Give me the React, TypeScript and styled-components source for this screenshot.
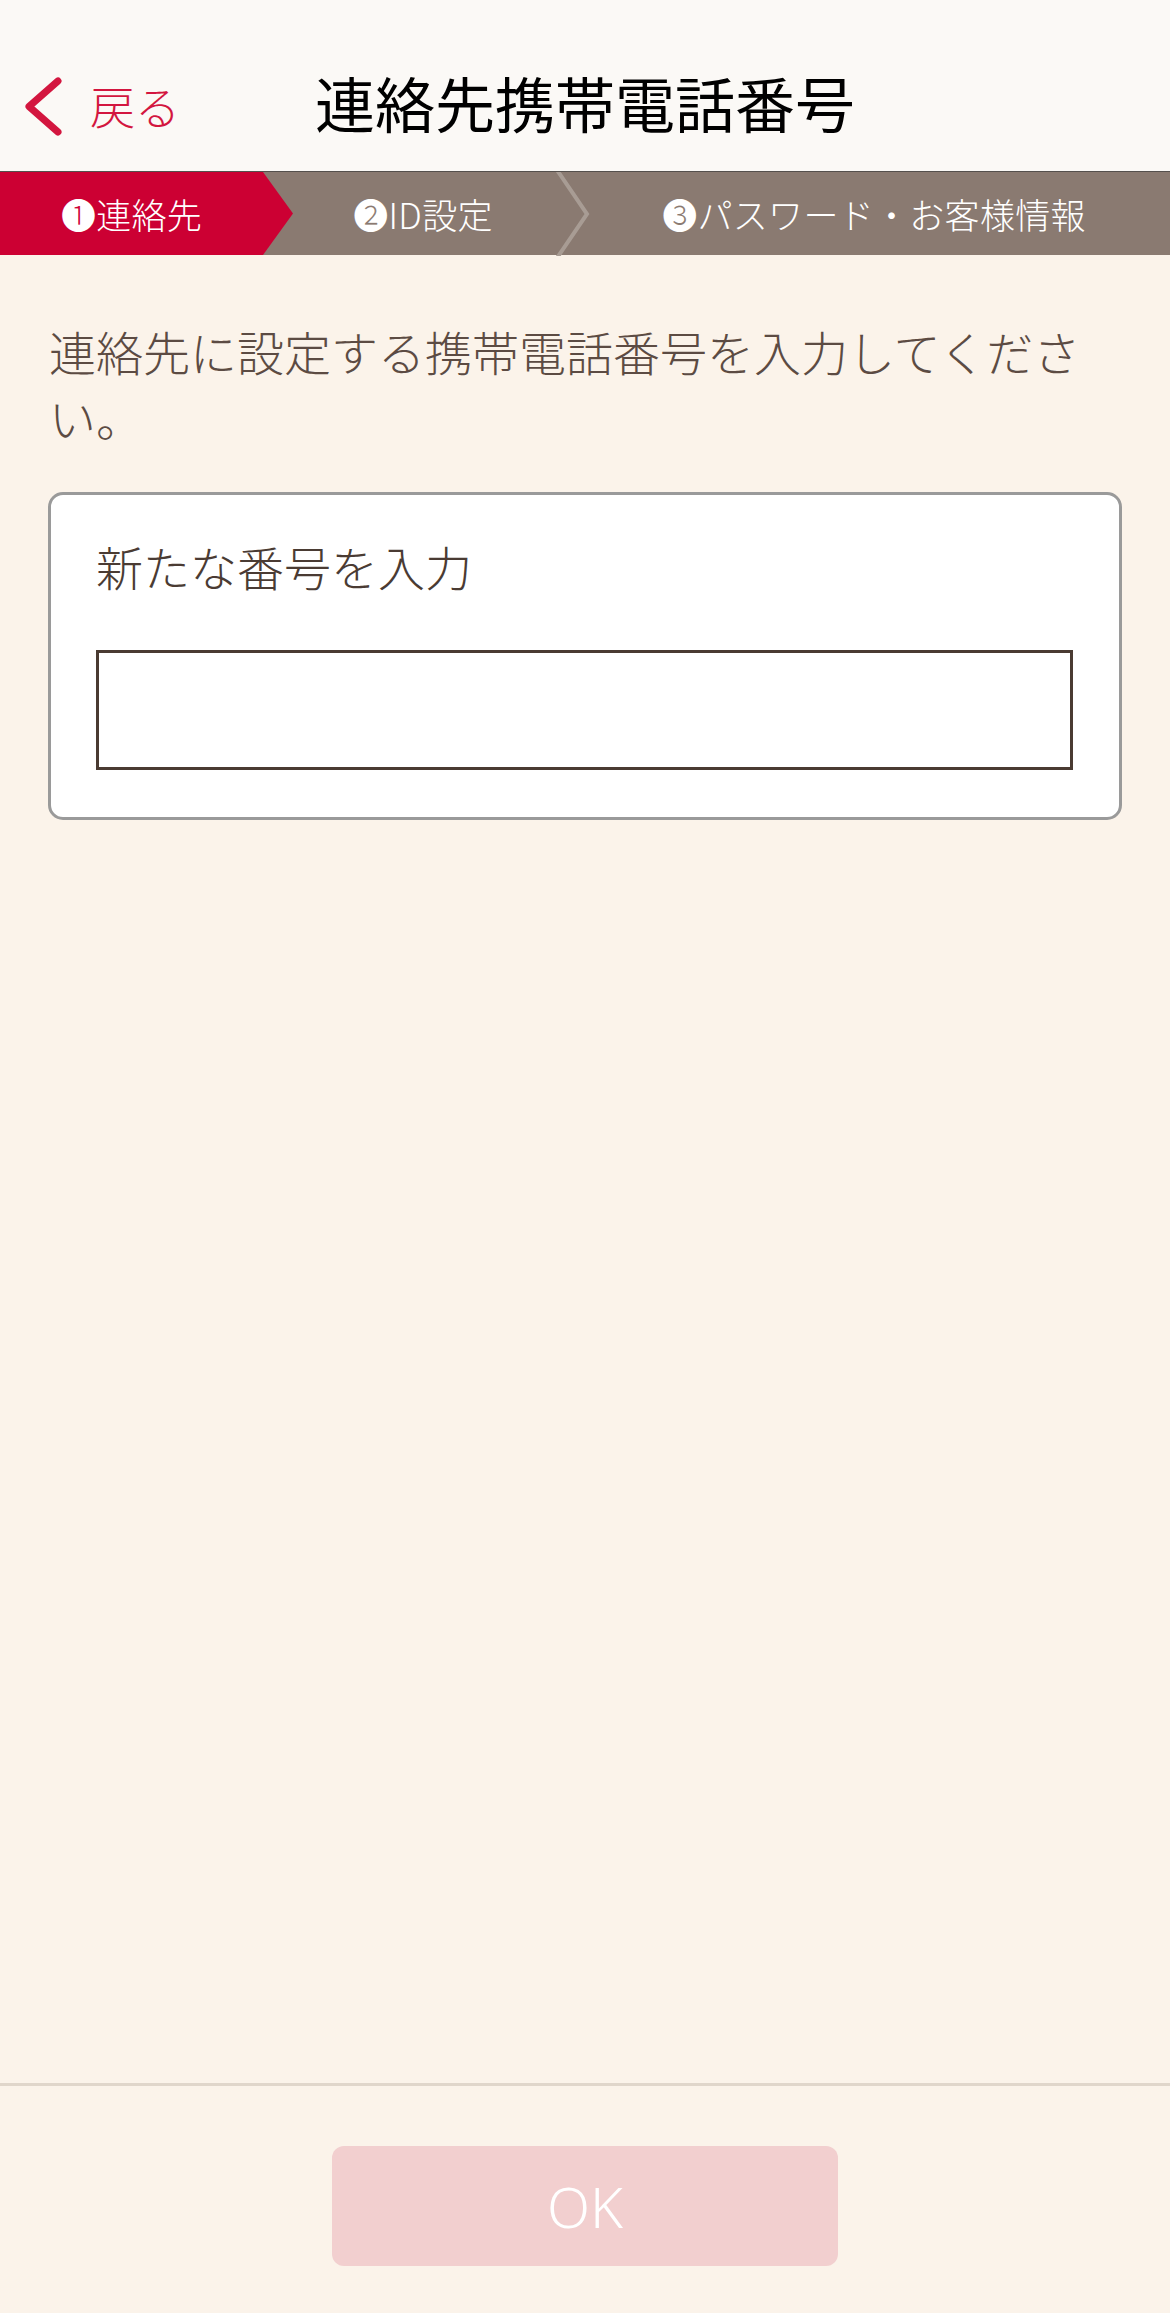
import React from "react";
import styled, { createGlobalStyle } from "styled-components";

const GlobalStyle = createGlobalStyle`
  html, body {
    margin: 0;
    padding: 0;
    background: #fbf3ea;
  }
  * {
    box-sizing: border-box;
  }
  body {
    font-family: "Noto Sans CJK JP", "Noto Sans", sans-serif;
  }
`;

const steps = [
  { mark: "❶", label: "連絡先" },
  { mark: "❷", label: "ID設定" },
  { mark: "❸", label: "パスワード・お客様情報" },
];

function App() {
  const [phone, setPhone] = React.useState<string>("");

  return (
    <>
      <GlobalStyle />
      <Page>
        <Header>
          <BackButton type="button">
            <svg width="40" height="60" viewBox="0 0 40 60">
              <polyline
                points="34,5 5,30.5 34,56"
                fill="none"
                stroke="#d3163f"
                strokeWidth="7"
                strokeLinecap="round"
                strokeLinejoin="round"
              />
            </svg>
            <BackLabel>戻る</BackLabel>
          </BackButton>
          <Title>連絡先携帯電話番号</Title>
          <span />
        </Header>

        <StepBar>
          {steps.map((s, i) => (
            <Step key={s.label} $index={i}>
              <StepLabel>
                {s.mark}
                {s.label}
              </StepLabel>
              {i === 1 && (
                <Separator width="36" height="84" viewBox="0 0 36 84">
                  <polyline
                    points="2,-2 32,42 2,86"
                    fill="none"
                    stroke="#a89c94"
                    strokeWidth="4"
                  />
                </Separator>
              )}
            </Step>
          ))}
        </StepBar>

        <Main>
          <Description>
            連絡先に設定する携帯電話番号を入力してください。
          </Description>
          <Card>
            <FieldLabel>新たな番号を入力</FieldLabel>
            <PhoneInput
              type="tel"
              value={phone}
              onChange={(e) => setPhone(e.target.value)}
            />
          </Card>
        </Main>

        <Footer>
          <OkButton type="button" disabled={phone.length === 0}>
            OK
          </OkButton>
        </Footer>
      </Page>
    </>
  );
}

const Page = styled.div`
  height: 100vh;
  display: flex;
  flex-direction: column;
  background: #fbf3ea;
`;

const Header = styled.header`
  height: 172px;
  padding-top: 32px;
  display: grid;
  grid-template-columns: 1fr auto 1fr;
  align-items: center;
  background: #fbf9f6;
  border-bottom: 1px solid #55504d;
`;

const BackButton = styled.button`
  display: flex;
  align-items: center;
  gap: 26px;
  padding: 8px 0 0 24px;
  background: none;
  border: none;
  cursor: pointer;
  justify-self: start;
`;

const BackLabel = styled.span`
  font-family: "Noto Sans CJK JP", sans-serif;
  font-size: 45px;
  font-weight: 300;
  color: #d3163f;
  line-height: 1;
`;

const Title = styled.h1`
  margin: 0;
  font-size: 60px;
  font-weight: 400;
  color: #000000;
  line-height: 1;
`;

const StepBar = styled.nav`
  height: 83px;
  display: grid;
  grid-template-columns: 293px 297px 1fr;
  background: #8a7a71;
`;

const Step = styled.div<{ $index: number }>`
  position: relative;
  display: flex;
  align-items: center;
  justify-content: center;
  padding-right: ${(p) => (p.$index === 0 ? 30 : p.$index === 1 ? 37 : 12)}px;
  background: ${(p) => (p.$index === 0 ? "#cc0033" : "transparent")};
  clip-path: ${(p) =>
    p.$index === 0
      ? "polygon(0 0, calc(100% - 30px) 0, 100% 50%, calc(100% - 30px) 100%, 0 100%)"
      : "none"};
`;

const StepLabel = styled.span`
  font-size: 35px;
  font-weight: 300;
  color: #ffffff;
  line-height: 1;
  white-space: nowrap;
  letter-spacing: 0.3px;
`;

const Separator = styled.svg`
  position: absolute;
  right: -1px;
  top: 0;
`;

const Main = styled.main`
  flex: 1;
  padding: 63px 48px 0 49px;
`;

const Description = styled.p`
  margin: 0;
  font-size: 47px;
  font-weight: 300;
  line-height: 66px;
  color: #5c4b43;
`;

const Card = styled.section`
  margin-top: 42px;
  margin-left: -1px;
  background: #ffffff;
  border: 3px solid #9a9a9a;
  border-radius: 15px;
  padding: 38px 46px 47px 45px;
`;

const FieldLabel = styled.label`
  display: block;
  font-size: 47px;
  font-weight: 300;
  line-height: 66px;
  color: #4a3b33;
`;

const PhoneInput = styled.input`
  display: block;
  width: 100%;
  height: 120px;
  margin-top: 51px;
  border: 3px solid #4a3b32;
  border-radius: 0;
  background: #ffffff;
  font-size: 47px;
  padding: 0 20px;
  color: #4a3b33;
  outline: none;
`;

const Footer = styled.footer`
  height: 230px;
  border-top: 3px solid #e0d6cb;
  display: flex;
  justify-content: center;
  padding-top: 60px;
`;

const OkButton = styled.button`
  width: 506px;
  height: 120px;
  border: none;
  border-radius: 12px;
  background: #f2cfcf;
  color: #ffffff;
  font-family: "Noto Sans", "Liberation Sans", sans-serif;
  font-size: 56px;
  font-weight: 300;
  cursor: pointer;
  &:disabled {
    cursor: default;
  }
`;

export default App;
